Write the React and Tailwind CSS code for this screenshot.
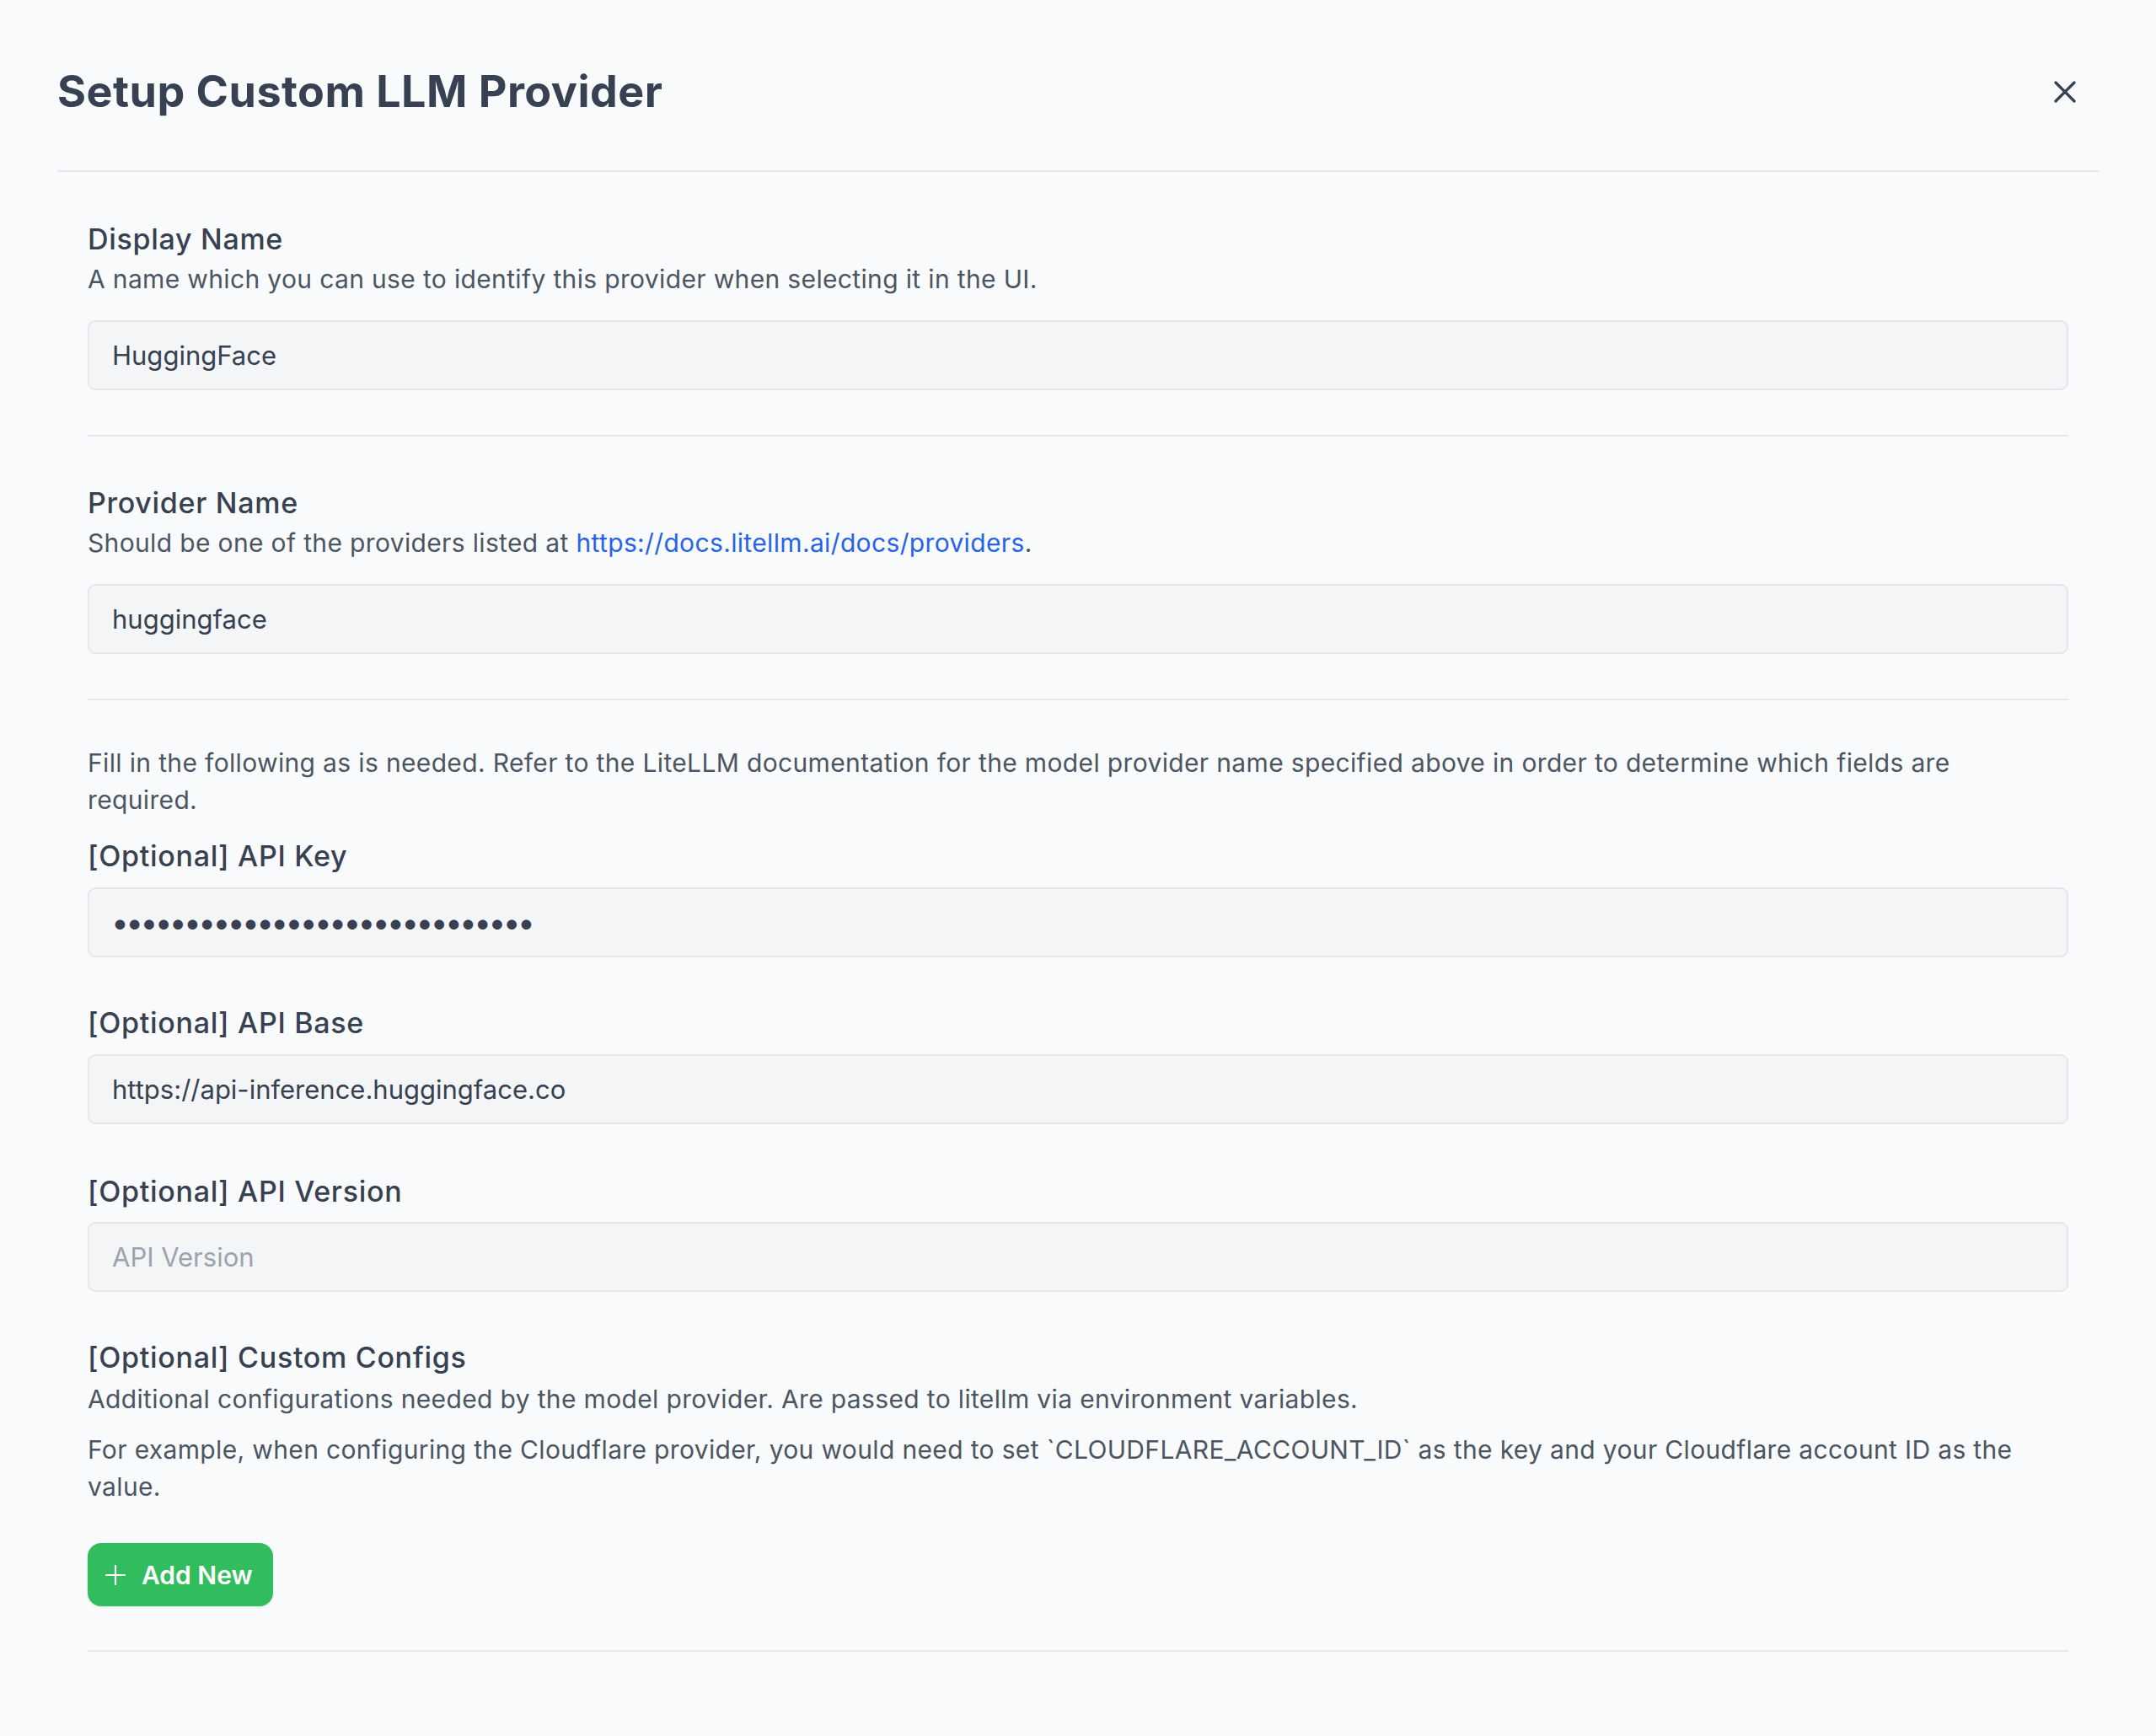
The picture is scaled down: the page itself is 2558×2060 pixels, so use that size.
import React from "react";

function Label({ children, className = "" }) {
  return (
    <div className={"text-[34px] leading-[44px] font-medium tracking-[0.7px] text-[#374151] " + className}>
      {children}
    </div>
  );
}

function Desc({ children, className = "" }) {
  return (
    <p className={"text-[30px] leading-[44px] tracking-[0.35px] text-[#4b5563] " + className}>{children}</p>
  );
}

function Field({ value, placeholder, type = "text", className = "" }) {
  return (
    <input
      type={type}
      readOnly
      value={value}
      placeholder={placeholder}
      className={
        "block w-full h-[83px] rounded-[9px] border-2 border-[#e5e7eb] bg-[#f4f5f7] px-[27px] text-[#374151] placeholder:text-[#9ca3af] outline-none font-['Inter'] " +
        className
      }
    />
  );
}

function Divider() {
  return <div className="h-[2px] bg-[#e5e7eb]" />;
}

export default function App() {
  return (
    <div className="min-h-screen w-full bg-[#f9fafb] font-['Inter',sans-serif] text-[#374151]">
      <div className="px-[68px]">
        <div className="flex items-center justify-between pt-[78px] pb-[62px] border-b-2 border-[#e5e7eb]">
          <h1 className="text-[52px] leading-[62px] font-bold text-[#374151] tracking-[0.5px]">
            Setup Custom LLM Provider
          </h1>
          <button className="mr-[27px] w-[26px] h-[26px] text-[#374151]">
            <svg viewBox="0 0 26 26" width="26" height="26" fill="none" stroke="currentColor" strokeWidth="3.2" strokeLinecap="round">
              <line x1="2" y1="2" x2="24" y2="24" />
              <line x1="24" y1="2" x2="2" y2="24" />
            </svg>
          </button>
        </div>

        <div className="px-[36px]">
          {/* Display name */}
          <div className="pt-[58px] pb-[53px]">
            <Label>Display Name</Label>
            <Desc className="mt-[3px]">
              A name which you can use to identify this provider when selecting it in the UI.
            </Desc>
            <Field value="HuggingFace" className="mt-[27px] text-[31px]" />
          </div>
          <Divider />

          {/* Provider name */}
          <div className="pt-[57px] pb-[53px]">
            <Label>Provider Name</Label>
            <Desc className="mt-[3px]">
              Should be one of the providers listed at{" "}
              <a className="text-[#2563eb]" href="#">
                https://docs.litellm.ai/docs/providers
              </a>
              .
            </Desc>
            <Field value="huggingface" className="mt-[27px] text-[31px]" />
          </div>
          <Divider />

          {/* Optional */}
          <div className="pt-[52px] pb-[52px]">
            <Desc className="max-w-[2330px]">
              Fill in the following as is needed. Refer to the LiteLLM documentation for the model
              provider name specified above in order to determine which fields are required.
            </Desc>
            <Label className="mt-[23px]">[Optional] API Key</Label>
            <Field
              type="password"
              value="hf_aaaaaaaaaaaaaaaaaaaaaaaaaa"
              className="mt-[15px] text-[37px] tracking-[-3.6px] pl-[26px]"
            />

            <Label className="mt-[56px]">[Optional] API Base</Label>
            <Field value="https://api-inference.huggingface.co" className="mt-[15px] text-[31px]" />

            <Label className="mt-[58px]">[Optional] API Version</Label>
            <Field value="" placeholder="API Version" className="mt-[14px] text-[31px]" />

            <Label className="mt-[56px]">[Optional] Custom Configs</Label>
            <Desc className="mt-[5px]">
              Additional configurations needed by the model provider. Are passed to litellm via
              environment variables.
            </Desc>
            <Desc className="mt-[16px]">
              For example, when configuring the Cloudflare provider, you would need to set
              `CLOUDFLARE_ACCOUNT_ID` as the key and your Cloudflare account ID as the value.
            </Desc>
            <button className="mt-[45px] flex items-center h-[75px] pl-[21px] pr-[24px] rounded-[16px] bg-[#31bd5e] text-white shadow-sm">
              <svg viewBox="0 0 24 24" width="24" height="24" fill="none" stroke="currentColor" strokeWidth="2.2" strokeLinecap="round">
                <line x1="12" y1="1" x2="12" y2="23" />
                <line x1="1" y1="12" x2="23" y2="12" />
              </svg>
              <span className="ml-[19px] text-[30px] font-semibold leading-none">Add New</span>
            </button>
          </div>
          <Divider />
        </div>
      </div>
    </div>
  );
}
